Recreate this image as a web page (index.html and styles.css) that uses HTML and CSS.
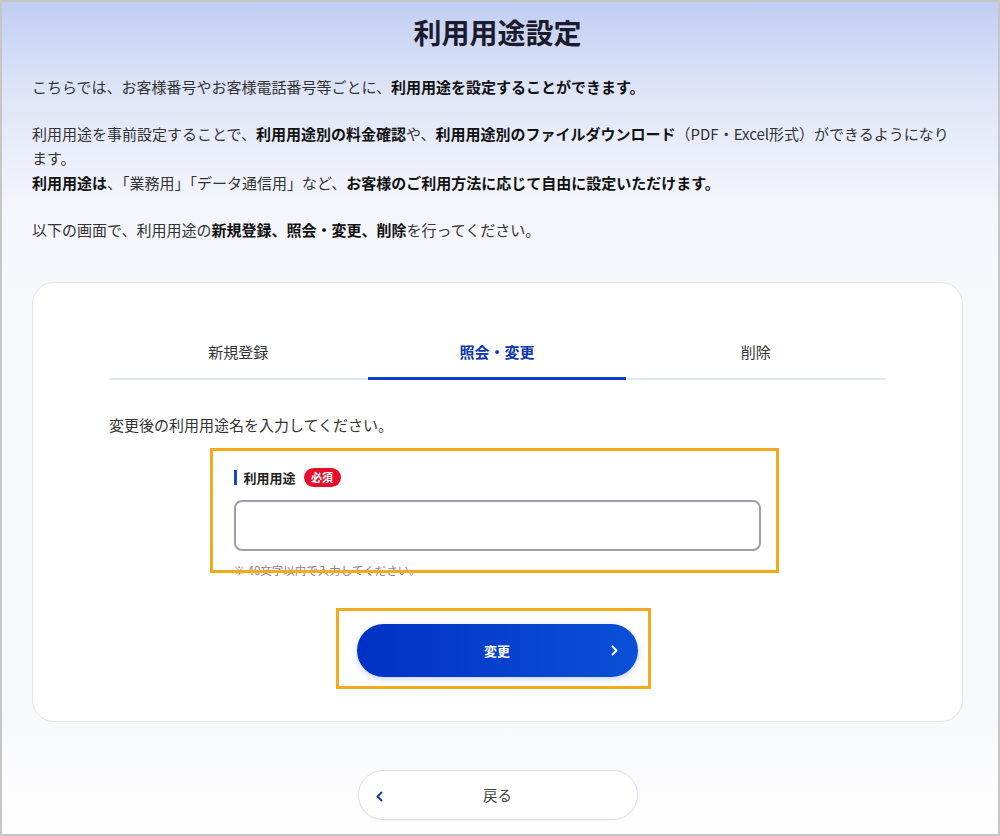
FILE: index.html
```html
<!DOCTYPE html>
<html lang="ja">
<head>
    <meta charset="UTF-8">
    <meta name="viewport" content="width=device-width, initial-scale=1.0">
    <title>利用用途設定</title>
    <link rel="stylesheet" href="styles.css">
</head>
<body>
    <div class="frame">
        <main class="page">
            <h1 class="title">利用用途設定</h1>

            <div class="intro">
                <p>こちらでは、お客様番号やお客様電話番号等ごとに、<b>利用用途を設定することができます。</b></p>
                <p>利用用途を事前設定することで、<b>利用用途別の料金確認</b>や、<b>利用用途別のファイルダウンロード</b>（PDF・Excel形式）ができるようになります。<br><b>利用用途は</b>、「業務用」「データ通信用」など、<b>お客様のご利用方法に応じて自由に設定いただけます。</b></p>
                <p class="last">以下の画面で、利用用途の<b>新規登録、照会・変更、削除</b>を行ってください。</p>
            </div>

            <section class="card">
                <div class="tabs">
                    <span class="tab">新規登録</span>
                    <span class="tab active">照会・変更</span>
                    <span class="tab">削除</span>
                </div>

                <p class="lead">変更後の利用用途名を入力してください。</p>

                <div class="form marked">
                    <div class="label-row">
                        <span class="label-bar"></span>
                        <span class="label">利用用途</span>
                        <span class="badge">必須</span>
                    </div>
                    <input class="text-input" type="text">
                    <p class="hint">※ 40文字以内で入力してください。</p>
                </div>

                <div class="submit-row">
                    <div class="submit-wrap marked">
                        <button class="btn-submit">
                            <span></span>
                            <span class="btn-text">変更</span>
                            <svg class="chev" width="7" height="11" viewBox="0 0 7 11"><polyline points="1.5,1.5 5.5,5.5 1.5,9.5" fill="none" stroke="#fff" stroke-width="2" stroke-linecap="round" stroke-linejoin="round"/></svg>
                        </button>
                    </div>
                </div>
            </section>

            <div class="back-row">
                <button class="btn-back">
                    <svg class="chev" width="7" height="11" viewBox="0 0 7 11"><polyline points="5.5,1.5 1.5,5.5 5.5,9.5" fill="none" stroke="#1d3e9f" stroke-width="2" stroke-linecap="round" stroke-linejoin="round"/></svg>
                    <span class="btn-text">戻る</span>
                    <span></span>
                </button>
            </div>
        </main>
    </div>
</body>
</html>
```

FILE: styles.css
```css
html, body {
    margin: 0;
    padding: 0;
}
body {
    font-family: "Noto Sans CJK JP", "Noto Sans", sans-serif;
    color: #333;
}
.frame {
    height: 836px;
    box-sizing: border-box;
    border: 2px solid #c6c6c6;
    overflow: hidden;
    background: linear-gradient(180deg, #c1cef3 0, #dfe5f8 90px, #f3f5fc 200px, #f7f8fb 300px, #f7f8fb 700px, #ffffff 836px);
}
.page {
    padding: 0 35px 0 30px;
}
.title {
    margin: 0;
    padding-top: 10px;
    text-align: center;
    font-size: 28px;
    line-height: 40px;
    font-weight: bold;
    color: #1b1b2b;
}
.intro {
    margin-top: 23px;
    font-size: 15px;
    line-height: 24.5px;
}
.intro p {
    margin: 0 0 22px;
}
.intro p.last {
    margin: 23px 0 0;
}
.intro b {
    color: #111;
}
.card {
    margin-top: 39px;
    background: #fff;
    border: 1px solid #e2e4ec;
    border-radius: 22px;
    padding: 48px 77px 44px 76px;
}
.tabs {
    display: grid;
    grid-template-columns: 1fr 1fr 1fr;
    border-bottom: 2px solid #e0e5f3;
}
.tab {
    position: relative;
    text-align: center;
    font-size: 15px;
    line-height: 20px;
    padding: 11px 0 16px;
    color: #333;
}
.tab.active {
    color: #0c35ad;
    font-weight: bold;
}
.tab.active::after {
    content: "";
    position: absolute;
    left: 0;
    right: 0;
    bottom: -2px;
    height: 3px;
    background: #0b3fcf;
}
.lead {
    margin: 33px 0 0;
    font-size: 15px;
    line-height: 24px;
}
.marked {
    position: relative;
}
.marked::after {
    content: "";
    position: absolute;
    border: 3px solid #f4aa1c;
    pointer-events: none;
}
.form {
    width: 527px;
    margin: 31px auto 0;
}
.form::after {
    top: -20px;
    left: -24px;
    right: -18px;
    bottom: 5px;
}
.label-row {
    display: flex;
    align-items: center;
    height: 20px;
}
.label-bar {
    width: 3px;
    height: 15px;
    background: #1746d0;
    margin-right: 7px;
}
.label {
    font-size: 13px;
    font-weight: bold;
    color: #222;
}
.badge {
    margin-left: 8px;
    width: 37px;
    height: 19px;
    border-radius: 10px;
    background: #e50f2b;
    color: #fff;
    font-size: 11px;
    font-weight: bold;
    line-height: 19px;
    text-align: center;
}
.text-input {
    display: block;
    box-sizing: border-box;
    width: 100%;
    height: 51px;
    margin-top: 12px;
    border: 2px solid #9b9eac;
    border-radius: 8px;
    background: #fff;
    outline: none;
}
.hint {
    margin: 11px 0 0;
    font-size: 11.5px;
    line-height: 16px;
    color: #888;
}
.submit-row {
    margin-top: 46px;
    display: flex;
    justify-content: center;
}
.submit-wrap::after {
    top: -16px;
    left: -21px;
    right: -13px;
    bottom: -12px;
}
.btn-submit,
.btn-back {
    display: grid;
    grid-template-columns: 1fr auto 1fr;
    align-items: center;
    font-family: inherit;
    cursor: pointer;
}
.btn-submit {
    width: 281px;
    height: 53px;
    border: none;
    border-radius: 27px;
    background: linear-gradient(90deg, #0031c3, #0b50d7);
    box-shadow: 0 2px 6px rgba(30, 80, 200, 0.25);
    color: #fff;
    font-size: 13px;
    font-weight: bold;
    padding: 0 20px;
}
.btn-submit .chev {
    justify-self: end;
}
.back-row {
    margin-top: 48px;
    display: flex;
    justify-content: center;
}
.btn-back {
    width: 280px;
    height: 50px;
    background: #fff;
    border: 1px solid #dde0ea;
    border-radius: 25px;
    box-shadow: 0 1px 3px rgba(0, 0, 0, 0.05);
    color: #444;
    font-size: 14.4px;
    padding: 0 17px;
}
.btn-back .chev {
    justify-self: start;
    margin-top: 4px;
}
```
